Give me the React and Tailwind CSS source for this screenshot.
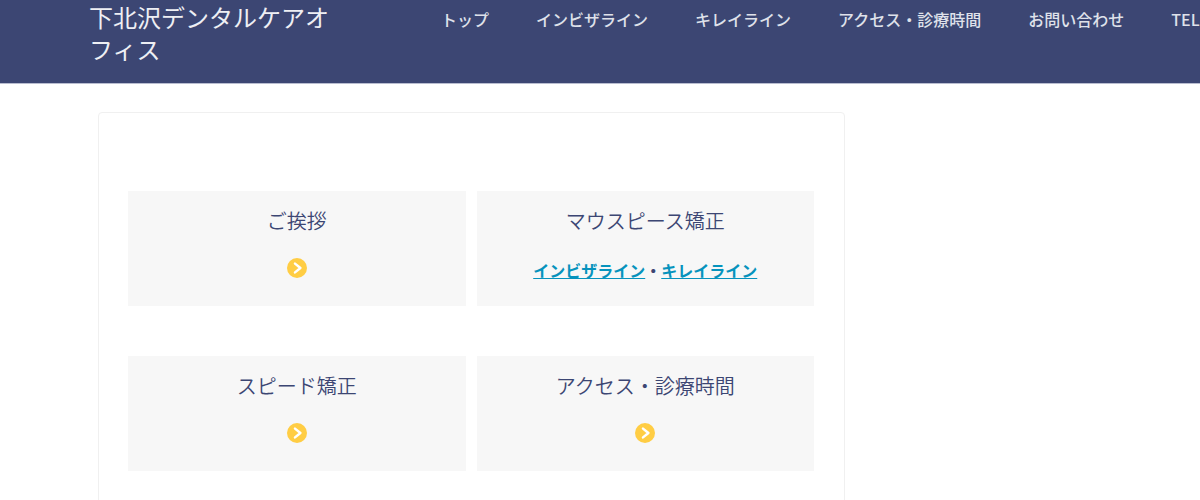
const navItems = [
  { label: "トップ", href: "#top" },
  { label: "インビザライン", href: "#invisalign" },
  { label: "キレイライン", href: "#kireiline" },
  { label: "アクセス・診療時間", href: "#access" },
  { label: "お問い合わせ", href: "#contact" },
  { label: "TEL", href: "#tel" },
];

const tiles = [
  { title: "ご挨拶", href: "#greeting" },
  {
    title: "マウスピース矯正",
    links: [
      { label: "インビザライン", href: "#invisalign" },
      { label: "キレイライン", href: "#kireiline" },
    ],
  },
  { title: "スピード矯正", href: "#speed" },
  { title: "アクセス・診療時間", href: "#access" },
];

function ArrowIcon() {
  return (
    <svg viewBox="0 0 20 20" className="size-5" aria-hidden="true">
      <circle cx="10" cy="10" r="10" fill="#ffcd44" />
      <path
        d="M8 5.6 L13.4 10 L8 14.4"
        fill="none"
        stroke="#fff"
        strokeWidth="2.5"
        strokeLinecap="round"
        strokeLinejoin="round"
      />
    </svg>
  );
}

function Header() {
  return (
    <header className="flex items-start overflow-hidden border-b border-[#b9bdd0] bg-[#3c4673] pt-px pb-[18px] pl-[89px] text-[#eeeff4]">
      <a href="#top" className="w-60 shrink-0 text-2xl leading-8">
        下北沢デンタルケアオフィス
      </a>
      <nav className="ml-28 flex shrink-0 gap-[47px] pt-1 text-[#dfe1ea]">
        {navItems.map((item) => (
          <a key={item.label} href={item.href} className="text-base leading-7 font-medium whitespace-nowrap">
            {item.label}
          </a>
        ))}
      </nav>
    </header>
  );
}

function Tile({ title, href, links }) {
  return (
    <section className="flex flex-col items-center bg-[#f7f7f7] pt-[15px] pb-6">
      <h2 className="text-xl leading-[30px] font-[350]">{title}</h2>
      {links ? (
        <p className="mt-[22px] text-base leading-6 font-bold">
          {links.map((link, index) => (
            <span key={link.label}>
              {index > 0 && "・"}
              <a href={link.href} className="text-[#0693bd] underline">
                {link.label}
              </a>
            </span>
          ))}
        </p>
      ) : (
        <a href={href} aria-label={title} className="mt-[22px]">
          <ArrowIcon />
        </a>
      )}
    </section>
  );
}

export default function App() {
  return (
    <div className="min-h-screen bg-white font-['Noto_Sans_CJK_JP',sans-serif] text-[#3c4673]">
      <Header />
      <div className="flex px-[98px] pt-7">
        <main className="min-w-0 flex-1 rounded border border-[#f0f0f0] pt-[78px] pr-[30px] pb-20 pl-[29px]">
          <div className="grid auto-rows-fr grid-cols-2 gap-x-[11px] gap-y-[50px]">
            {tiles.map((tile) => (
              <Tile key={tile.title} {...tile} />
            ))}
          </div>
        </main>
        <aside className="w-[257px] shrink-0" />
      </div>
    </div>
  );
}
